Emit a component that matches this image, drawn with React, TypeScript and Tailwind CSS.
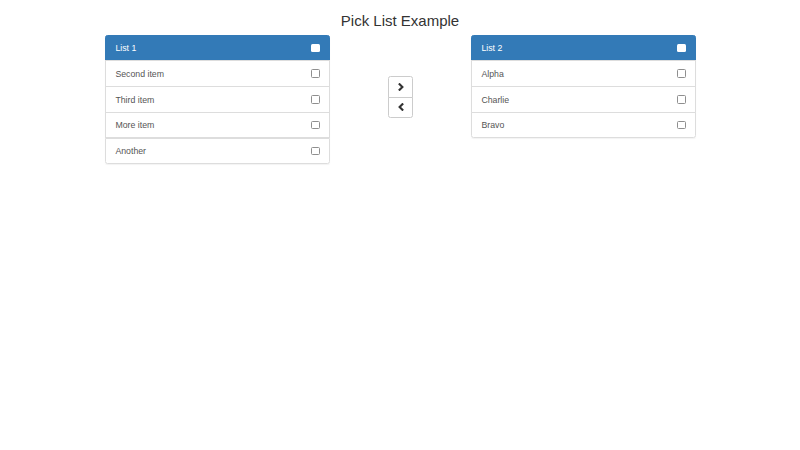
import React from "react";

function Box({ header }: { header?: boolean }) {
  return header ? (
    <span className="block w-[8.5px] h-[8.5px] rounded-[1.5px] bg-white" />
  ) : (
    <span className="block w-[8.5px] h-[8.5px] rounded-[1.5px] border border-[#8f8f8f] bg-white" />
  );
}

function Panel({ title, items }: { title: string; items: string[] }) {
  return (
    <div className="w-[225px] self-start shadow-[0_1px_1px_rgba(0,0,0,0.05)] rounded-[2.5px]">
      <div className="flex items-center justify-between h-[26px] px-[9.4px] bg-[#337ab7] border border-[#337ab7] rounded-t-[2.5px] text-white">
        <span>{title}</span>
        <Box header />
      </div>
      {items.map((it, i) => (
        <div
          key={it}
          className={
            "flex items-center justify-between h-[26.4px] -mt-[0.6px] px-[9.4px] border border-[#ddd] bg-white text-[#555] " +
            (i === items.length - 1 ? "rounded-b-[2.5px]" : "")
          }
        >
          <span className="pt-px">{it}</span>
          <Box />
        </div>
      ))}
    </div>
  );
}

function Chevron({ dir }: { dir: "left" | "right" }) {
  return (
    <svg width="8" height="8" viewBox="0 0 8 8">
      {dir === "right" ? (
        <polyline points="2.6,1.2 5.4,4 2.6,6.8" fill="none" stroke="#333" strokeWidth="2.1" strokeLinecap="square" strokeLinejoin="miter" />
      ) : (
        <polyline points="5.4,1.2 2.6,4 5.4,6.8" fill="none" stroke="#333" strokeWidth="2.1" strokeLinecap="square" strokeLinejoin="miter" />
      )}
    </svg>
  );
}

export default function App() {
  return (
    <div className="w-full min-h-[450px] bg-white font-['Liberation_Sans',Arial,sans-serif] text-[8.75px] leading-[12.5px] text-[#333]">
      <div className="pt-[12.5px] pb-[6px] text-center text-[15px] leading-[16.5px] text-[#333]">
        Pick List Example
      </div>
      <div className="flex items-start pl-[105px]">
        <Panel title="List 1" items={["Second item", "Third item", "More item", "Another"]} />
        <div className="w-[141px] flex justify-center pt-[41px]">
          <div className="flex flex-col">
            <div className="w-[25px] h-[21.5px] flex items-center justify-center border border-[#ccc] rounded-t-[2.5px] bg-white">
              <Chevron dir="right" />
            </div>
            <div className="w-[25px] h-[21.5px] -mt-px flex items-center justify-center border border-[#ccc] rounded-b-[2.5px] bg-white">
              <Chevron dir="left" />
            </div>
          </div>
        </div>
        <Panel title="List 2" items={["Alpha", "Charlie", "Bravo"]} />
      </div>
    </div>
  );
}
